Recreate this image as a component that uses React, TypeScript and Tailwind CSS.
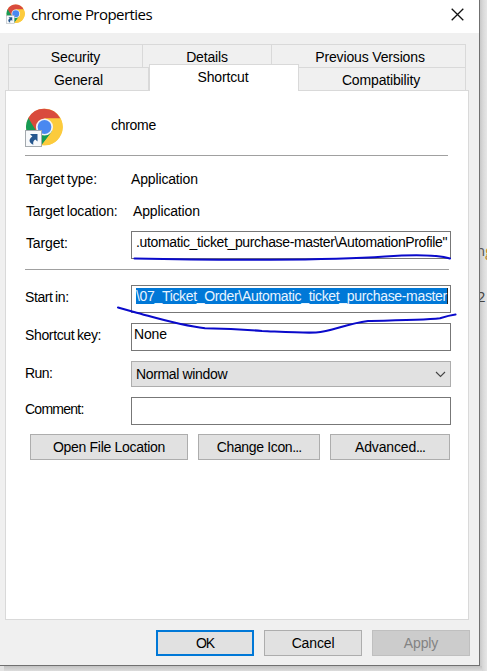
import React from "react";

const FONT = "font-['Liberation_Sans',Arial,sans-serif]";

function ChromeIcon({ className }: { className: string }) {
  return (
    <svg viewBox="0 0 38 39" className={className}>
      <circle cx="19.5" cy="19" r="18.3" fill="#fccb3d" />
      <path d="M19.5 19 L3.5 9.7 A18.3 18.3 0 0 0 16.5 37.1 L27.5 23.5Z" fill="#169b55" />
      <path d="M19.5 19 L11.5 23.5 L3.3 9.9 A18.3 18.3 0 0 1 35.4 10.5 H19.5Z" fill="#d94b3d" />
      <path d="M19.5 10.5 H35.4 A18.3 18.3 0 0 1 17 37.2 L26.9 23.2Z" fill="#fccb3d" />
      <circle cx="19.5" cy="19" r="8.6" fill="#f4f4f4" />
      <circle cx="19.5" cy="19" r="6.9" fill="#4a88f0" />
      <rect x="0.5" y="22.5" width="16" height="16" fill="#f7f9fb" stroke="#a3a9ae" />
      <path
        d="M5 26 H12.5 V33.5 L10.3 31.4 C8.3 32.6 7.8 34.2 8.4 36.8 C3.8 35.2 3.2 31.2 7.4 28.6Z"
        fill="#25578f"
      />
    </svg>
  );
}

interface RowProps {
  label: string;
  labelClass: string;
  className: string;
  children: React.ReactNode;
}

function Row({ label, labelClass, className, children }: RowProps) {
  return (
    <div className={`flex w-full shrink-0 ${className}`}>
      <div className="w-[105px] shrink-0 pt-[3px] leading-[18px]">
        <span className={labelClass}>{label}</span>
      </div>
      {children}
    </div>
  );
}

const FIELD = "flex h-[28px] w-[320px] shrink-0 items-start overflow-hidden border border-[#777] bg-white pt-[2px] leading-[16px]";
const BUTTON = "flex h-[26px] shrink-0 items-center justify-center border border-[#adadad] bg-[#e1e1e1]";
const TAB = "flex h-[23px] shrink-0 items-center justify-center border-t border-r border-[#d9d9d9] bg-[#f0f0f0] pt-[3px]";

export default function App() {
  return (
    <div
      className={`relative h-[671px] w-[487px] overflow-hidden bg-[#e3e3e3] text-[14px] tracking-[-0.15px] whitespace-nowrap text-black ${FONT}`}
    >
      <div className="absolute top-0 right-0 h-[671px] w-[8px] bg-linear-to-r from-[#c2c2c2] via-[#d9d9d9] to-[#e6e6e6]" />
      <div className="absolute top-[666px] left-[4px] h-[5px] w-[478px] bg-linear-to-b from-[#c2c2c2] to-[#dcdcdc]" />
      <div className="absolute top-[242px] left-[476px] font-['Open_Sans',sans-serif] text-[15px] leading-[17px] tracking-normal text-[#555]">
        n<span className="text-[#b98218]">g</span>
      </div>
      <div className="absolute top-[288px] left-[477px] font-['Open_Sans',sans-serif] text-[15px] leading-[17px] tracking-normal text-[#444]">
        2
      </div>

      <div className="relative flex h-[666px] w-[480px] flex-col border-r border-b border-[#707070] bg-[#f0f0f0]">
        <header className="flex h-[33px] shrink-0 items-center bg-white pl-[6px]">
          <ChromeIcon className="-mt-[5px] h-[20px] w-[19px]" />
          <h1 className="-mt-[4px] ml-[6px] flex-1 font-['Open_Sans',sans-serif] text-[15px] tracking-[-0.55px]">
            chrome Properties
          </h1>
          <svg viewBox="0 0 13 13" className="mt-[-5px] mr-[15px] h-[13px] w-[13px]">
            <path d="M0.7 0.7 L12.3 12.3 M12.3 0.7 L0.7 12.3" stroke="#111" strokeWidth="1.3" />
          </svg>
        </header>

        <nav className="mt-[11px] ml-[8px] w-[458px] shrink-0 border-l border-[#d9d9d9]">
          <div className="flex">
            <div className={`${TAB} w-[134px]`}>Security</div>
            <div className={`${TAB} w-[129px]`}>Details</div>
            <div className={`${TAB} w-[194px] pl-[3px]`}>Previous Versions</div>
          </div>
          <div className="flex">
            <div className={`${TAB} w-[140px]`}>General</div>
            <div className="z-10 -mt-[3px] -mb-[1px] flex h-[27px] w-[150px] items-center justify-center border-x border-t border-[#d9d9d9] bg-white pr-[2px] pb-[2px]">
              Shortcut
            </div>
            <div className={`${TAB} w-[167px] pr-[2px]`}>Compatibility</div>
          </div>
        </nav>

        <main className="ml-[5px] flex h-[530px] w-[464px] shrink-0 flex-col border border-[#d9d9d9] bg-white pl-[20px]">
          <div className="flex h-[64px] shrink-0 pt-[17px]">
            <ChromeIcon className="-ml-[1px] h-[39px] w-[38px]" />
            <div className="ml-[48px] pt-[8px] leading-[18px] tracking-[-0.3px]">chrome</div>
          </div>
          <div className="ml-[-1px] h-px w-[423px] shrink-0 bg-[#a0a0a0]" />
          <Row label="Target type:" labelClass="tracking-[-0.1px] [word-spacing:-1px]" className="mt-[11px] h-[32px]">
            <div className="pt-[3px] leading-[18px]">Application</div>
          </Row>
          <Row label="Target location:" labelClass="tracking-[-0.15px] [word-spacing:-1px]" className="h-[32px]">
            <div className="pt-[3px] pl-[2px] leading-[18px]">Application</div>
          </Row>
          <Row label="Target:" labelClass="tracking-[-0.15px]" className="h-[28px]">
            <div className={`${FIELD} pl-[4px]`}>
              <span className="tracking-[-0.36px]">.utomatic_ticket_purchase-master\AutomationProfile"</span>
            </div>
          </Row>
          <div className="mt-[10px] ml-[-1px] h-px w-[424px] shrink-0 bg-[#a0a0a0]" />
          <Row label="Start in:" labelClass="-ml-px tracking-[-0.4px] [word-spacing:-1px]" className="mt-[15px] h-[28px]">
            <div className={`${FIELD} pl-[4px]`}>
              <span className="border-r border-[#222] bg-[#0078d7] tracking-[-0.33px] text-[#e8f4ff]">
                \07_Ticket_Order\Automatic_ticket_purchase-master
              </span>
            </div>
          </Row>
          <Row label="Shortcut key:" labelClass="-ml-px tracking-[-0.35px] [word-spacing:-1px]" className="mt-[10px] h-[28px]">
            <div className={`${FIELD} pl-[2px]`}>None</div>
          </Row>
          <Row label="Run:" labelClass="-ml-px tracking-[-0.6px]" className="mt-[10px] h-[26px]">
            <div className="flex h-[26px] w-[320px] shrink-0 items-center justify-between border border-[#adadad] bg-[#e1e1e1] pr-[4px] pl-[4px]">
              <span className="tracking-[-0.35px]">Normal window</span>
              <svg viewBox="0 0 11 7" className="h-[7px] w-[11px]">
                <path d="M1 1 L5.5 5.5 L10 1" fill="none" stroke="#444" strokeWidth="1.1" />
              </svg>
            </div>
          </Row>
          <Row label="Comment:" labelClass="-ml-px tracking-[-0.75px]" className="mt-[10px] h-[28px]">
            <div className={FIELD} />
          </Row>
          <div className="mt-[9px] ml-[4px] flex gap-[10px]">
            <div className={`${BUTTON} w-[158px] tracking-[-0.3px]`}>Open File Location</div>
            <div className={`${BUTTON} w-[122px] tracking-[-0.35px]`}>
              Change Icon<span className="tracking-[-0.9px]">...</span>
            </div>
            <div className={`${BUTTON} w-[120px]`}>
              Advanced<span className="tracking-[-0.9px]">...</span>
            </div>
          </div>
        </main>

        <footer className="mt-[10px] ml-[156px] flex gap-[10px]">
          <div className="flex h-[26px] w-[98px] items-center justify-center border-2 border-[#0078d7] bg-[#e1e1e1] tracking-[-1px]">
            OK
          </div>
          <div className={`${BUTTON} w-[98px]`}>Cancel</div>
          <div className="flex h-[26px] w-[98px] items-center justify-center border border-[#bfbfbf] bg-[#cccccc] text-[#838383]">
            Apply
          </div>
        </footer>
      </div>

      <svg viewBox="0 0 487 671" className="pointer-events-none absolute inset-0 h-[671px] w-[487px]">
        <g fill="none" stroke="#0a0acb" strokeWidth="2.1" strokeLinecap="round" strokeLinejoin="round">
          <path d="M134.5 258.5 C180 259.5 220 260 270 259.7 C320 259.5 360 258.3 385 256.5 C415 254.5 436 254.5 450 258.5" />
          <path d="M118 307.5 L134 312 C160 319 180 325.5 205 328.3 C225 328.7 245 329.7 262 331 C285 332 305 333.2 316 332.5 C332 331.5 345 324 368 321 C395 320.5 425 320 440 318.3 C447 316 450 315.2 455.5 314.5" />
        </g>
      </svg>
    </div>
  );
}
